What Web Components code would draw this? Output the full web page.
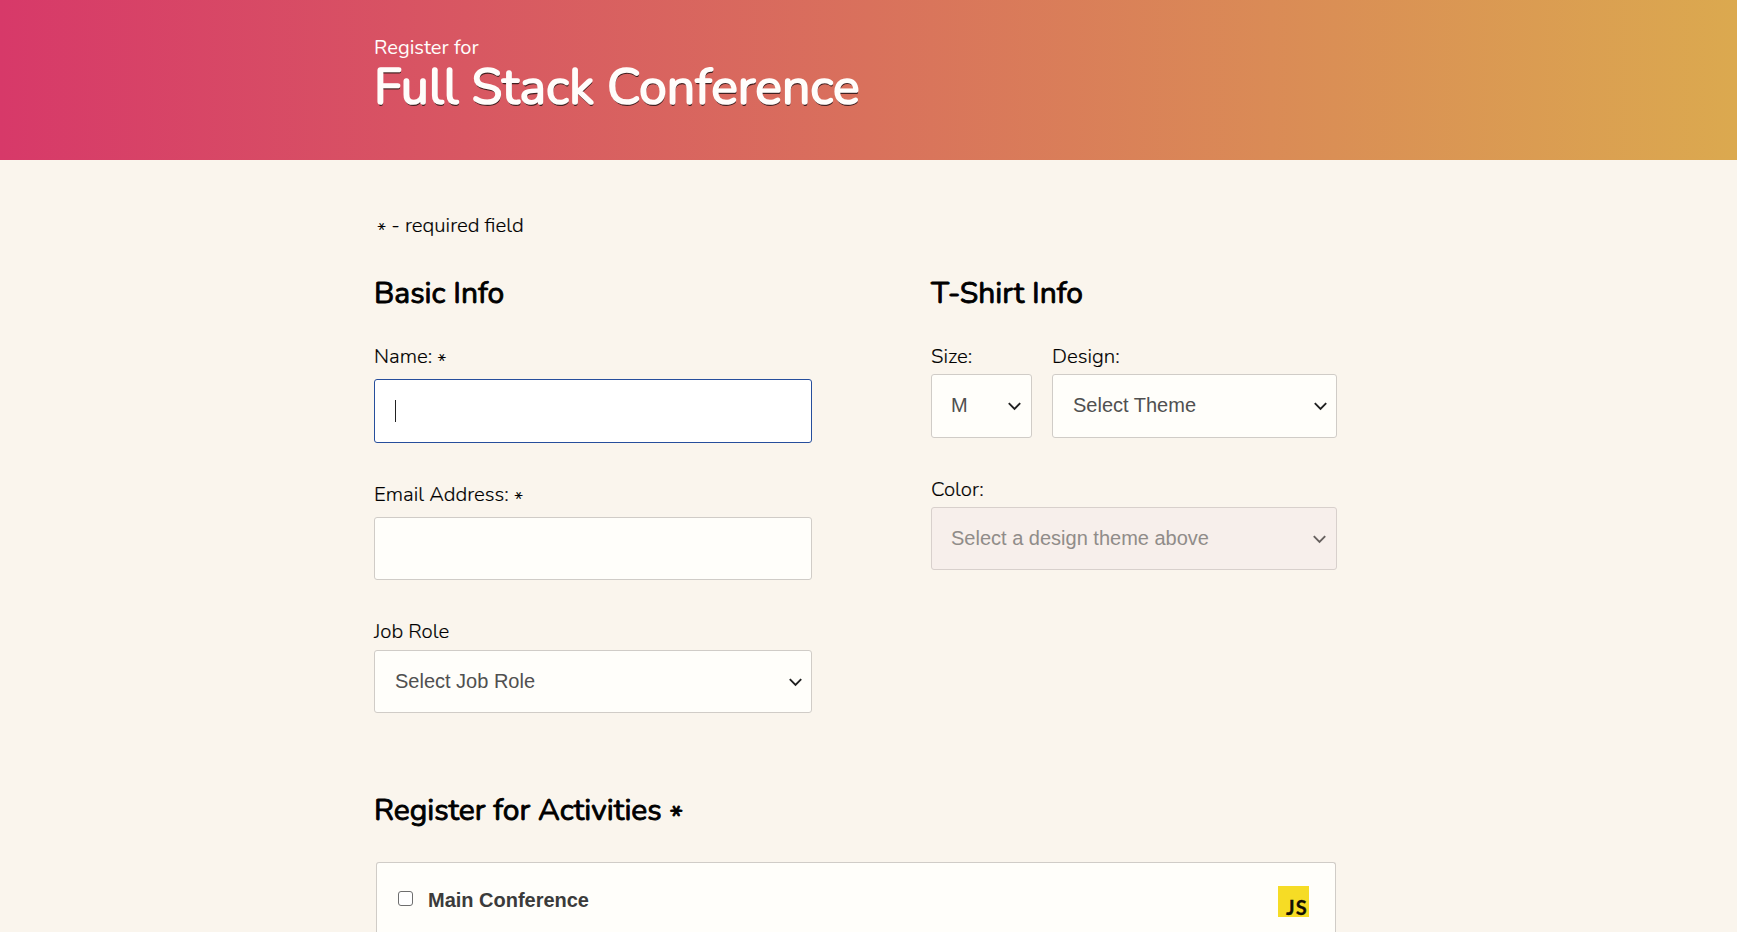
<!DOCTYPE html>
<html lang="en"><head><meta charset="utf-8"><title>Full Stack Conference</title>
<style>html,body{margin:0;height:932px;overflow:hidden;background:#faf5ed}body{font-family:Nunito,Lato,sans-serif;color:#000}</style></head>
<body><conference-page></conference-page>
<script>
// One line of text, tracked so that it fills the given measure.
class TrackedText extends HTMLElement{
  connectedCallback(){
    this.attachShadow({mode:'open'}).innerHTML='<style>:host{display:inline-block;white-space:pre;vertical-align:baseline}</style><slot></slot>';
    const m=parseFloat(this.getAttribute('measure'));
    if(m){const n=this.textContent.length;const w=this.getBoundingClientRect().width;this.style.letterSpacing=((m-w)/n)+'px';}
  }
}
customElements.define('tracked-text',TrackedText);

class RequiredMark extends HTMLElement{
  connectedCallback(){
    this.attachShadow({mode:'open'}).innerHTML='<style>:host{display:inline-block;transform:translateY(.24em)}</style>*';
  }
}
customElements.define('required-mark',RequiredMark);

class PageHeader extends HTMLElement{
  connectedCallback(){
    this.attachShadow({mode:'open'}).innerHTML=`<style>
    :host{display:block;box-sizing:border-box;height:160px;padding:36px 0 0 374px;color:#fffdfb;background:linear-gradient(90deg,#d73969,#dba94f)}
    .k{font-size:20.1px;line-height:23px;height:23px}h1{margin:0;padding-top:1px;font-size:50px;line-height:56px;font-weight:400;-webkit-text-stroke:1.7px currentColor;text-shadow:.5px 2px .5px #402020}
    </style><div class="k">Register for</div><h1>Full Stack Conference</h1>`;
  }
}
customElements.define('page-header',PageHeader);

class SectionTitle extends HTMLElement{
  connectedCallback(){
    this.attachShadow({mode:'open'}).innerHTML='<style>:host{display:block;height:36px}h2{margin:0;font-size:30px;line-height:40px;font-weight:400;-webkit-text-stroke:.9px currentColor;white-space:nowrap}</style><h2><slot></slot></h2>';
  }
}
customElements.define('section-title',SectionTitle);

class FormField extends HTMLElement{
  connectedCallback(){
    this.attachShadow({mode:'open'}).innerHTML=`<style>:host{display:block}
    .l{height:24px;line-height:var(--lead,26px);font-size:20.4px;font-weight:300;-webkit-text-stroke:.15px currentColor;white-space:nowrap;margin-bottom:var(--gap,12px)}</style>
    <div class="l"><slot name="label"></slot></div><slot></slot>`;
  }
}
customElements.define('form-field',FormField);

class FieldBox extends HTMLElement{
  connectedCallback(){
    const sel=this.hasAttribute('select'),foc=this.hasAttribute('focused');
    this.attachShadow({mode:'open'}).innerHTML=`<style>
    :host{display:flex;align-items:center;justify-content:space-between;box-sizing:border-box;height:63px;border:1px solid #d0ccc7;border-radius:3px;background:#fffefa;padding:0 9px 0 20px;font:20px/24px "Liberation Sans",Arial,sans-serif;color:#505050}
    :host([tall]){height:64px}
    :host([inset]){padding:0 10px 0 19px}
    :host([focused]){background:#fff;border-color:#264e9c}
    :host([disabled]){background:#f7efeb;border-color:#d8d0cc;color:#908c89}
    span{padding-bottom:2px}
    svg{display:block;margin-top:1px;color:#202020}:host([disabled]) svg{color:#66605e}
    i{width:1px;height:22px;background:#222}
    </style>${foc?'<i></i>':'<span><slot></slot></span>'}${sel?'<svg width="13" height="9" viewBox="0 0 13 9"><path d="M.8 1.2 6.5 7 12.2 1.2" fill="none" stroke="currentColor" stroke-width="1.9"/></svg>':''}`;
  }
}
customElements.define('field-box',FieldBox);

class ActivityItem extends HTMLElement{
  connectedCallback(){
    this.attachShadow({mode:'open'}).innerHTML=`<style>
    :host{display:flex;box-sizing:border-box;height:70px;border:1px solid #d0ccc7;border-bottom:0;border-radius:3px 3px 0 0;background:#fffefa;padding:23px 26px 0 21px;font:700 20px/28px "Liberation Sans",Arial,sans-serif;color:#3b3b3b}
    .c{box-sizing:border-box;width:15px;height:15px;margin:5px 15px 0 0;border:1px solid #6e6e6e;border-radius:3px;background:#fff}
    .t{flex:1}
    .js{width:31px;height:31px;background:#f6dc25;color:#110f05;display:flex;justify-content:flex-end;align-items:flex-end;font:700 20px/20px Lato,sans-serif;box-sizing:border-box;padding:0 1px 0 0;-webkit-text-stroke:.3px currentColor}
    </style><div class="c"></div><div class="t"><slot></slot></div><div class="js"><tracked-text measure="22">JS</tracked-text></div>`;
  }
}
customElements.define('activity-item',ActivityItem);

class ConferencePage extends HTMLElement{
  connectedCallback(){
    this.attachShadow({mode:'open'}).innerHTML=`<style>
    :host{display:block}
    main{width:963px;padding:52px 0 0 374px}
    .note{height:24px;line-height:26px;font-size:20.4px;font-weight:300;-webkit-text-stroke:.15px currentColor;padding-left:3px;margin-bottom:38px;white-space:nowrap}
    .cols{display:grid;grid-template-columns:438px 406px;column-gap:119px}
    section-title{margin-bottom:33px}
    .left form-field+form-field{margin-top:38px}
    .row{display:grid;grid-template-columns:101px 285px;column-gap:20px;margin-bottom:39px}
    .acts{margin-top:78px}.acts section-title{margin-bottom:35px}
    activity-item{margin:0 1px 0 2px}
    </style>
    <page-header></page-header>
    <main>
      <div class="note"><required-mark></required-mark> - required field</div>
      <div class="cols">
        <div class="left">
          <section-title>Basic Info</section-title>
          <form-field><span slot="label">Name: <required-mark></required-mark></span><field-box focused tall></field-box></form-field>
          <form-field><span slot="label">Email Address: <required-mark></required-mark></span><field-box></field-box></form-field>
          <form-field style="--gap:8px"><span slot="label">Job Role</span><field-box select><tracked-text measure="140">Select Job Role</tracked-text></field-box></form-field>
        </div>
        <div>
          <section-title>T-Shirt Info</section-title>
          <div class="row">
            <form-field style="--gap:7px"><span slot="label">Size:</span><field-box select tall inset>M</field-box></form-field>
            <form-field style="--gap:7px"><span slot="label">Design:</span><field-box select tall><tracked-text measure="123">Select Theme</tracked-text></field-box></form-field>
          </div>
          <form-field style="--gap:6px;--lead:25px"><span slot="label">Color:</span><field-box select disabled inset><tracked-text measure="258">Select a design theme above</tracked-text></field-box></form-field>
        </div>
      </div>
      <div class="acts">
        <section-title>Register for Activities <required-mark></required-mark></section-title>
        <activity-item><tracked-text measure="161">Main Conference</tracked-text></activity-item>
      </div>
    </main>`;
  }
}
customElements.define('conference-page',ConferencePage);
</script></body></html>
